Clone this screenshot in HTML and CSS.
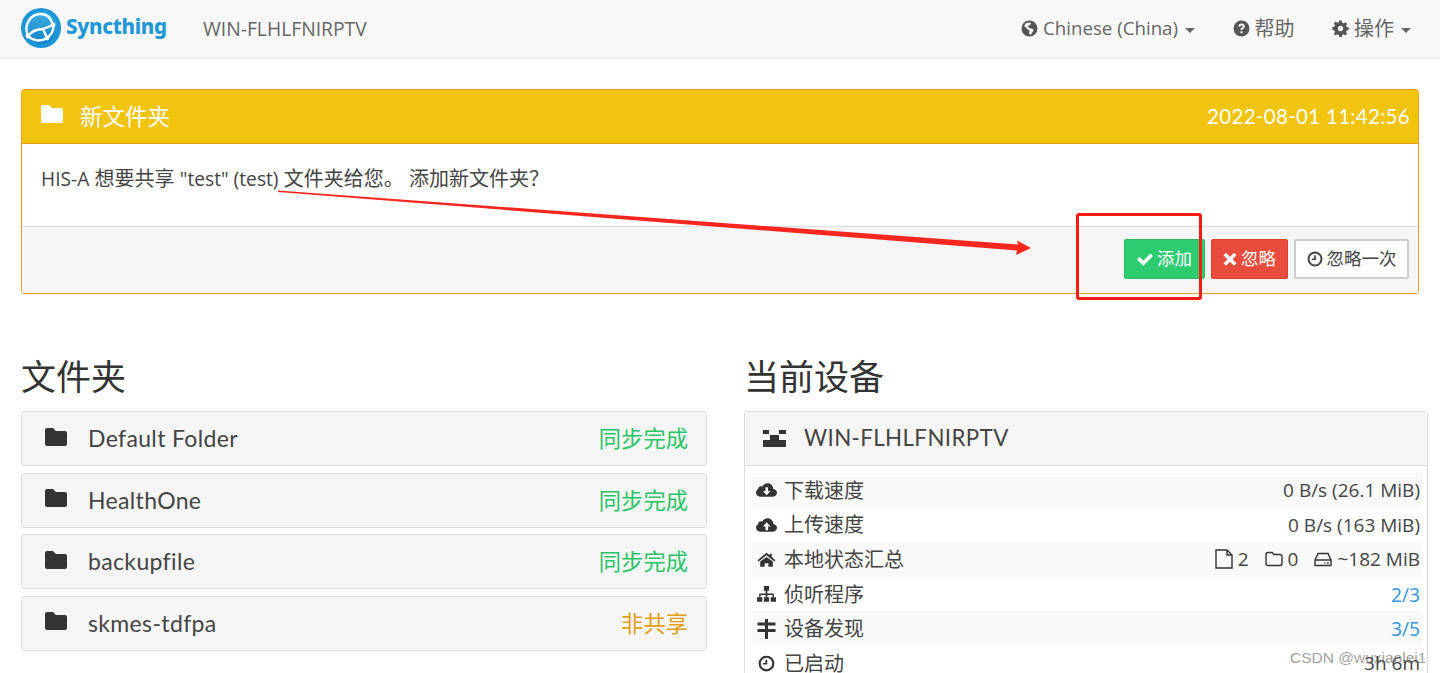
FILE: index.html
```html
<!DOCTYPE html>
<html lang="zh">
<head>
<meta charset="utf-8">
<title>Syncthing</title>
<link rel="stylesheet" href="styles.css">
</head>
<body>
<nav class="nav">
  <a class="brand">
    <svg class="logo" viewBox="0 0 40 40"><defs><linearGradient id="lg" x1="0" y1="0" x2="0" y2="1"><stop offset="0" stop-color="#3fb0e2"/><stop offset="1" stop-color="#0f82c6"/></linearGradient></defs><circle cx="20" cy="20" r="20" fill="#1c96d6"/><circle cx="20" cy="20" r="16" fill="url(#lg)"/><path d="M7 28C2 16 10 6 20 6c6 0 10 4 12 11M7 28c3-4 9-7 15-7l10-4M22 21l4 9M7 28c5 5 13 6 19 2M32 17c1 5-2 10-6 13" fill="none" stroke="#fff" stroke-width="2.300" stroke-linecap="round"/><circle cx="32" cy="17" r="2.400" fill="#fff"/><circle cx="7" cy="28" r="2.400" fill="#fff"/><circle cx="26" cy="30" r="2.400" fill="#fff"/></svg>
    <span class="brand-text">Syncthing</span>
  </a>
  <span class="host">WIN-FLHLFNIRPTV</span>
  <div class="nav-right">
    <span class="nav-item"><svg class="ico" viewBox="0 0 16 16"><path fill-rule="evenodd" d="M8 .5a7.500 7.500 0 1 0 0 15 7.500 7.500 0 0 0 0-15zM6 2.500 4 3.500 3 6l2 1 1 2 2 .5-.5 3 1.500 1.500 2-3 1-2-2.500-1L7 7 6.500 5.500 8.500 5 9.500 2.500z"/></svg><span class="lang">Chinese (China)</span><i class="caret"></i></span>
    <span class="nav-item"><svg class="ico" viewBox="0 0 16 16"><path fill-rule="evenodd" d="M8 .5a7.500 7.500 0 1 0 0 15 7.500 7.500 0 0 0 0-15zM7 10.500h2v2H7zM5 6.200C5 4.500 6.300 3.400 8.100 3.400c1.700 0 3 1.100 3 2.600 0 1.200-.7 1.800-1.400 2.300-.6.400-.8.600-.8 1.200H7c0-1.200.4-1.800 1.200-2.300.6-.4.900-.7.900-1.100 0-.5-.4-.9-1-.9-.7 0-1.100.4-1.200 1.100z"/></svg>帮助</span>
    <span class="nav-item"><svg class="ico" viewBox="0 0 16 16"><path fill-rule="evenodd" d="M6.800.5h2.400l.4 2 1.300.6 1.700-1.100 1.700 1.700-1.100 1.700.5 1.300 2 .4v2.400l-2 .4-.5 1.300 1.100 1.700-1.700 1.700-1.700-1.100-1.300.5-.4 2H6.800l-.4-2-1.300-.5-1.700 1.100-1.700-1.700 1.100-1.700-.5-1.300-2-.4V6.600l2-.4.500-1.300L1.700 3.200l1.700-1.700 1.700 1.100 1.300-.6zM8 5.500a2.500 2.500 0 1 0 0 5 2.500 2.500 0 0 0 0-5z"/></svg>操作<i class="caret"></i></span>
  </div>
</nav>

<main class="content">
  <section class="notice">
    <header class="notice-head">
      <div class="notice-title"><svg class="notice-folder" viewBox="0 0 22 18"><path d="M2 0h6l3 3h9a2 2 0 0 1 2 2v11a2 2 0 0 1-2 2H2a2 2 0 0 1-2-2V2a2 2 0 0 1 2-2z"/></svg>新文件夹</div>
      <time class="notice-time">2022-08-01 11:42:56</time>
    </header>
    <div class="notice-body"><span class="lat">HIS-A</span> 想要共享 <span class="lat">"test" (test)</span> 文件夹给您。 添加新文件夹？</div>
    <footer class="notice-foot">
      <button class="btn btn-add"><svg class="btn-ico" viewBox="0 0 16 16"><path d="M0 8.500 2.500 6 6.300 9.800 13.500 2.500 16 5 6.300 14.700z"/></svg>添加</button>
      <button class="btn btn-ignore"><svg class="btn-ico btn-ico-x" viewBox="0 0 14 14"><path d="M3 .8 7 4.800 11 .8 13.500 3.300 9.500 7.300 13.500 11.300 11 13.800 7 9.800 3 13.800 .5 11.300 4.500 7.300 .5 3.300z"/></svg>忽略</button>
      <button class="btn btn-once"><svg class="btn-ico" viewBox="0 0 16 16"><path fill-rule="evenodd" d="M8 .5a7.500 7.500 0 1 0 0 15A7.500 7.500 0 0 0 8 .5zm0 2a5.500 5.500 0 1 1 0 11 5.500 5.500 0 0 1 0-11zM7.200 4.200h1.700V9H4.800V7.500h2.400z"/></svg>忽略一次</button>
    </footer>
  </section>

  <div class="columns">
    <section class="col">
      <h1 class="col-title">文件夹</h1>
      <div class="folders">
        <div class="folder"><svg class="folder-ico" viewBox="0 0 22 18"><path d="M2 0h6l3 3h9a2 2 0 0 1 2 2v11a2 2 0 0 1-2 2H2a2 2 0 0 1-2-2V2a2 2 0 0 1 2-2z"/></svg><span class="folder-name">Default Folder</span><span class="status ok">同步完成</span></div>
        <div class="folder"><svg class="folder-ico" viewBox="0 0 22 18"><path d="M2 0h6l3 3h9a2 2 0 0 1 2 2v11a2 2 0 0 1-2 2H2a2 2 0 0 1-2-2V2a2 2 0 0 1 2-2z"/></svg><span class="folder-name">HealthOne</span><span class="status ok">同步完成</span></div>
        <div class="folder"><svg class="folder-ico" viewBox="0 0 22 18"><path d="M2 0h6l3 3h9a2 2 0 0 1 2 2v11a2 2 0 0 1-2 2H2a2 2 0 0 1-2-2V2a2 2 0 0 1 2-2z"/></svg><span class="folder-name">backupfile</span><span class="status ok">同步完成</span></div>
        <div class="folder"><svg class="folder-ico" viewBox="0 0 22 18"><path d="M2 0h6l3 3h9a2 2 0 0 1 2 2v11a2 2 0 0 1-2 2H2a2 2 0 0 1-2-2V2a2 2 0 0 1 2-2z"/></svg><span class="folder-name">skmes-tdfpa</span><span class="status warn">非共享</span></div>
      </div>
    </section>
    <section class="col">
      <h1 class="col-title">当前设备</h1>
      <div class="device">
        <div class="device-head"><svg class="device-ico" viewBox="0 0 23 17"><path d="M0 0h6v4H0zM16 0h7v4h-7zM0 10h7V5h9v5h7v7H0z"/></svg><span class="device-name">WIN-FLHLFNIRPTV</span></div>
        <div class="rows">
          <div class="row"><span class="row-label"><svg class="row-ico" viewBox="0 0 20 16"><path fill-rule="evenodd" d="M16.500 6.500C16.400 3.400 14 1 11 1 8.800 1 6.900 2.300 6 4.200 5.600 4 5.200 3.900 4.800 3.900 3.300 3.900 2.100 5 2 6.600.8 7.300 0 8.600 0 10c0 2.200 1.800 4 4 4h12c2.200 0 4-1.800 4-4 0-1.700-1.500-3.100-3.500-3.500zM9 5h2.500v3.500h2.300L10.200 12.500 6.600 8.500H9z"/></svg>下载速度</span><span class="row-val">0 B/s (26.1 MiB)</span></div>
          <div class="row"><span class="row-label"><svg class="row-ico" viewBox="0 0 20 16"><path fill-rule="evenodd" d="M16.500 6.500C16.400 3.400 14 1 11 1 8.800 1 6.900 2.300 6 4.200 5.600 4 5.200 3.900 4.800 3.900 3.300 3.900 2.100 5 2 6.600.8 7.300 0 8.600 0 10c0 2.200 1.800 4 4 4h12c2.200 0 4-1.800 4-4 0-1.700-1.500-3.100-3.500-3.500zM9 12.500h2.500V9h2.300L10.200 5 6.600 9H9z"/></svg>上传速度</span><span class="row-val">0 B/s (163 MiB)</span></div>
          <div class="row"><span class="row-label"><svg class="row-ico" viewBox="0 0 20 16"><path d="M10 1.500 13 4V2.500h2v3.200l3.500 3-1 1.100L10 4 2.500 9.800l-1-1.100zM10 5.500 16 10v5h-4.200v-3.500H8.200V15H4v-5z"/></svg>本地状态汇总</span><span class="row-val"><svg class="stat-ico" viewBox="0 0 18 20"><path d="M1 1h11l5 5v13H1zM12 1v5h5" fill="none" stroke="#333" stroke-width="1.400"/></svg>2<svg class="stat-ico gap" viewBox="0 0 18 20"><path d="M1 5.500q0-2 2-2h4l2 2h6q2 0 2 2v7q0 2-2 2H3q-2 0-2-2z" fill="none" stroke="#333" stroke-width="1.400"/></svg>0<svg class="stat-ico gap" viewBox="0 0 18 20"><path d="M1 11 4 4.500h10l3 6.500v5.500H1zM1 11h16M13 14h1.800M10.500 14h1" fill="none" stroke="#333" stroke-width="1.400"/></svg>~182 MiB</span></div>
          <div class="row"><span class="row-label"><svg class="row-ico" viewBox="0 0 20 16"><path d="M7.500 0h5v4.500h-1.700V7H17v3.500h2V15h-5v-4.500h1.700V8.500h-4.900v2h1.700V15h-5v-4.500h1.700v-2H4.300v2H6V15H1v-4.500h2V7h6.200V4.500H7.500z"/></svg>侦听程序</span><a class="link">2/3</a></div>
          <div class="row"><span class="row-label"><svg class="row-ico" viewBox="0 0 20 20"><path d="M8.500 0h3v3.500H19V6.500H11.500V10H19v3H11.500V20h-3v-7H1V10h7.500V6.500H1V3.500h7.500z"/></svg>设备发现</span><a class="link">3/5</a></div>
          <div class="row"><span class="row-label"><svg class="row-ico" viewBox="0 0 20 16"><path fill-rule="evenodd" d="M10 .5a7.500 7.500 0 1 0 0 15 7.500 7.500 0 0 0 0-15zm0 2a5.500 5.500 0 1 1 0 11 5.500 5.500 0 0 1 0-11zM9 4.500h1.700V9H6.500V7.500H9z"/></svg>已启动</span><span class="row-val">3h 6m</span></div>
        </div>
      </div>
    </section>
  </div>
</main>

<!-- annotation drawn over the screenshot -->
<svg class="arrow" viewBox="0 0 1440 673" aria-hidden="true"><path d="M278 190.500 1018 244.500 1017 240.500 1031 248 1016 255 1017 250.500 278 192z" fill="#f7271f"/></svg>
<div class="redbox"></div>
<span class="watermark">CSDN @wuxiaolei1</span>
</body>
</html>
```
FILE: styles.css
```css
* { box-sizing: border-box; }
html, body { margin: 0; height: 673px; overflow: hidden; }
body { background: #fff; color: #333; position: relative; font: 20px/1.4 "Open Sans", "Noto Sans CJK SC", sans-serif; }

.nav { height: 59px; background: #f8f8f8; border-bottom: 1px solid #e7e7e7; display: flex; align-items: center; padding: 0 29px 2px 21px; color: #666; }
.brand { display: flex; align-items: center; width: 182px; }
.logo { width: 40px; height: 40px; }
.brand-text { font: 800 20.500px/1 "Noto Sans", sans-serif; color: #1f97d9; margin-left: 5px; margin-top: -3px; letter-spacing: -.3px; }
.host { font-size: 19.300px; color: #666; margin-top: 2px; }
.nav-right { margin-left: auto; display: flex; gap: 37.500px; margin-top: 1px; }
.nav-item { display: flex; align-items: center; color: #666; }
.lang { font-size: 18.700px; }
.ico { width: 17px; height: 17px; margin-right: 5px; fill: #555; }
.caret { width: 0; height: 0; margin-left: 7px; margin-top: 3px; border-left: 5px solid transparent; border-right: 5px solid transparent; border-top: 5px solid #666; }

.content { padding: 30px 21px 0; }
.notice { height: 205px; border: 1px solid #e5a128; border-radius: 3px; overflow: hidden; display: flex; flex-direction: column; }
.notice-head { height: 54px; flex: none; background: #f1c40f; border-bottom: 1px solid #e3a012; display: flex; align-items: center; justify-content: space-between; padding: 0 8px 0 19px; color: #fff; }
.notice-title { display: flex; align-items: center; font-size: 22.500px; }
.notice-folder { width: 22px; height: 18px; margin-right: 17px; margin-top: -5px; fill: #fff; }
.notice-time { font: 400 20.500px/1 Lato, "Noto Sans", sans-serif; letter-spacing: .3px; }
.notice-body { height: 82px; flex: none; padding: 21px 19px 0; color: #444; }
.lat { font-size: 19.200px; }
.notice-foot { flex: 1; background: #f5f5f5; border-top: 1px solid #ddd; display: flex; justify-content: flex-end; align-items: center; gap: 6px; padding: 0 9px 3px; }
.btn { height: 40px; border: 1px solid; border-radius: 2px; padding: 0 12px; display: flex; align-items: center; font: 17.500px/1 "Open Sans", "Noto Sans CJK SC", sans-serif; }
.btn-ico { width: 16px; height: 16px; margin-right: 4px; fill: currentColor; }
.btn-ico-x { width: 14px; height: 14px; }
.btn-add { background: #2ecc71; border-color: #27bd65; color: #fff; }
.btn-ignore { background: #e74c3c; border-color: #d9412f; color: #fff; padding: 0 11px; }
.btn-once { background: #fff; border-color: #ccc; border-width: 2px; color: #444; padding: 0 10.500px; }

.columns { display: grid; grid-template-columns: 686px 684px; column-gap: 37px; margin-top: 56px; }
.col-title { margin: 0; height: 61px; font-size: 35px; font-weight: 400; line-height: 53px; color: #333; }
.folders { display: flex; flex-direction: column; gap: 6.670px; }
.folder { height: 55px; background: #f5f5f5; border: 1px solid #ddd; border-radius: 3px; display: flex; align-items: center; padding: 0 18px 0 23px; }
.folder-ico { width: 22px; height: 18px; margin-right: 21px; margin-top: -4px; fill: #333; }
.folder-name { font: 23px/1 Lato, "Noto Sans", sans-serif; color: #444; letter-spacing: .35px; }
.status { margin-left: auto; font-size: 22.300px; }
.ok { color: #2ac468; }
.warn { color: #e39f12; }

.device { border: 1px solid #ddd; border-radius: 3px; }
.device-head { height: 54px; background: #f5f5f5; border-bottom: 1px solid #ddd; display: flex; align-items: center; padding-left: 18px; }
.device-ico { width: 23px; height: 17px; margin-right: 18px; fill: #333; }
.device-name { font: 22.300px/1 Lato, "Noto Sans", sans-serif; color: #444; letter-spacing: .4px; }
.rows { padding: 7px 5px 0 7px; }
.row { height: 34.600px; display: flex; align-items: center; justify-content: space-between; padding: 0 2px 0 4px; color: #444; }
.row:nth-child(odd) { background: #f9f9f9; }
.row-label { display: flex; align-items: center; padding-top: 1px; }
.row-ico { width: 21px; height: 17px; margin-right: 7px; fill: #333; }
.row:nth-child(5) .row-ico { height: 20px; }
.row-val { display: flex; align-items: center; font-size: 19px; }
.stat-ico { width: 18px; height: 20px; margin-right: 5px; }
.gap { margin-left: 16px; }
.link { color: #3498db; font-size: 19.300px; }

.arrow { position: absolute; left: 0; top: 0; width: 1440px; height: 673px; pointer-events: none; }
.redbox { position: absolute; left: 1076px; top: 213px; width: 126px; height: 87px; border: 3px solid #fa1c14; border-radius: 3px; }
.watermark { position: absolute; left: 1290px; top: 649px; font: 15.500px/18px "Liberation Sans", sans-serif; color: rgba(90,90,90,.6); }
```
